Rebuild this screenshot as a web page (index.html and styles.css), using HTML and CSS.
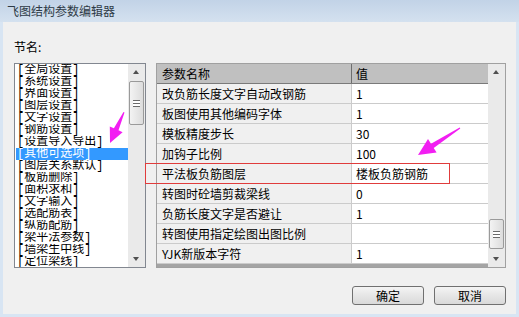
FILE: index.html
```html
<!DOCTYPE html>
<html lang="zh-CN">
<head>
    <meta charset="UTF-8">
    <title>飞图结构参数编辑器</title>
    <link rel="stylesheet" href="styles.css">
</head>
<body>
<div class="window">
    <div class="titlebar">飞图结构参数编辑器</div>

    <div class="client">
        <div class="label">节名:</div>

        <div class="main">
            <div class="listbox">
                <ul class="items">
                    <li>[全局设置]</li>
                    <li>[系统设置]</li>
                    <li>[界面设置]</li>
                    <li>[图层设置]</li>
                    <li>[文字设置]</li>
                    <li>[钢筋设置]</li>
                    <li>[设置导入导出]</li>
                    <li class="sel">[其他可选项]</li>
                    <li>[图层关系默认]</li>
                    <li>[板筋删除]</li>
                    <li>[面积求和]</li>
                    <li>[文字输入]</li>
                    <li>[选配筋表]</li>
                    <li>[纵筋配筋]</li>
                    <li>[梁平法参数]</li>
                    <li>[墙梁生中线]</li>
                    <li>[定位梁线]</li>
                </ul>
                <div class="vscroll">
                    <div class="sbtn up"></div>
                    <div class="track"><div class="thumb list-thumb"><i></i></div></div>
                    <div class="sbtn down"></div>
                </div>
            </div>

            <div class="grid">
                <div class="table">
                    <div class="row head">
                        <div class="name">参数名称</div>
                        <div class="val">值</div>
                    </div>
                    <div class="row"><div class="name">改负筋长度文字自动改钢筋</div><div class="val">1</div></div>
                    <div class="row"><div class="name">板图使用其他编码字体</div><div class="val">1</div></div>
                    <div class="row"><div class="name">模板精度步长</div><div class="val">30</div></div>
                    <div class="row"><div class="name">加钩子比例</div><div class="val">100</div></div>
                    <div class="row"><div class="name">平法板负筋图层</div><div class="val">楼板负筋钢筋</div></div>
                    <div class="row"><div class="name">转图时砼墙剪裁梁线</div><div class="val">0</div></div>
                    <div class="row"><div class="name">负筋长度文字是否避让</div><div class="val">1</div></div>
                    <div class="row"><div class="name">转图使用指定绘图出图比例</div><div class="val"></div></div>
                    <div class="row"><div class="name">YJK新版本字符</div><div class="val">1</div></div>
                    <div class="hbar"></div>
                </div>
                <div class="vscroll">
                    <div class="sbtn up"></div>
                    <div class="track"><div class="thumb grid-thumb"><i></i></div></div>
                    <div class="sbtn down"></div>
                </div>
            </div>
        </div>

        <div class="buttons">
            <button class="btn">确定</button>
            <button class="btn">取消</button>
        </div>
    </div>

    <!-- annotation marks drawn over the dialog -->
    <svg class="marks" width="519" height="317" viewBox="0 0 519 317">
        <rect x="145.5" y="163.5" width="304" height="20" fill="none" stroke="#e03c3c" stroke-width="1"/>
        <polygon fill="#f21ef2" points="123.5,112 124.5,112.5 118.5,130.3 122.6,132.2 110,143 109.8,126.4 113.9,128.3"/>
        <polygon fill="#f21ef2" points="460.3,128.4 459.7,127.6 431,143.7 428,139.1 418,155 436.6,152.5 433.7,147.9"/>
    </svg>
</div>
</body>
</html>
```

FILE: styles.css
```css
* {
    box-sizing: border-box;
}

body {
    margin: 0;
    font-family: "Noto Sans CJK SC", "Liberation Sans", sans-serif;
    font-size: 12px;
    color: #000;
    background: #fff;
}

.window {
    position: relative;
    width: 519px;
    height: 317px;
    background: #d8e5f3;
    display: flex;
    flex-direction: column;
}

.titlebar {
    height: 22px;
    padding: 3px 0 0 7px;
    line-height: 16px;
    font-size: 12px;
    color: #2e3a46;
    background: linear-gradient(#c2d3e7, #d4e1ef);
}

.client {
    flex: 1;
    margin: 0 3px 3px 3px;
    background: #f0f0f0;
    padding: 18px 10px 0 11px;
    display: flex;
    flex-direction: column;
}

.label {
    height: 14px;
    line-height: 14px;
    margin-bottom: 9px;
}

.main {
    display: flex;
    gap: 10px;
    height: 205px;
}

/* left list */
.listbox {
    width: 132px;
    height: 205px;
    border: 1px solid #828790;
    background: #fff;
    display: flex;
}

.items {
    list-style: none;
    margin: 0;
    padding: 0 0 0 1px;
    width: 113px;
    overflow: hidden;
}

.items li {
    height: 12px;
    line-height: 12px;
    overflow: hidden;
    font-family: "Liberation Mono", "Noto Sans CJK SC", monospace;
    font-size: 12px;
    padding-left: 1px;
    white-space: nowrap;
}

.items li.sel {
    background: #3399ff;
    color: #fff;
}

/* scrollbars */
.vscroll {
    width: 17px;
    display: flex;
    flex-direction: column;
    background: #eaeaea;
}

.sbtn {
    height: 17px;
    position: relative;
}

.sbtn::after {
    content: "";
    position: absolute;
    left: 5px;
    width: 0;
    height: 0;
    border-left: 3.5px solid transparent;
    border-right: 3.5px solid transparent;
}

.sbtn.up::after {
    top: 6px;
    border-bottom: 4px solid #505050;
}

.sbtn.down::after {
    top: 7px;
    border-top: 4px solid #505050;
}

.track {
    flex: 1;
    position: relative;
}

.thumb {
    margin: 0 1px;
    border: 1px solid #9a9a9a;
    border-radius: 2px;
    background: linear-gradient(90deg, #f3f3f3, #dcdcdc);
    display: flex;
    align-items: center;
    justify-content: center;
}

.thumb i {
    width: 7px;
    height: 7px;
    border-top: 1px solid #6a6a6a;
    border-bottom: 1px solid #6a6a6a;
    background: linear-gradient(#fff 0 2px, #6a6a6a 2px 3px, #fff 3px);
}

.list-thumb {
    height: 44px;
}

.grid-thumb {
    margin-top: 138px;
    height: 30px;
}

/* right grid */
.grid {
    width: 350px;
    height: 205px;
    border: 1px solid #a0a0a0;
    background: #f0f0f0;
    display: flex;
}

.table {
    width: 331px;
    display: flex;
    flex-direction: column;
}

.row {
    display: flex;
    height: 20px;
    line-height: 19px;
    border-bottom: 1px solid #cbcbcb;
}

.row .name {
    width: 195px;
    padding-left: 5px;
    background: #f0f0f0;
    border-right: 1px solid #cbcbcb;
    white-space: nowrap;
}

.row .val {
    flex: 1;
    padding-left: 4px;
    background: #fff;
    white-space: nowrap;
}

.row.head {
    border-bottom: 1px solid #7a7a7a;
}

.row.head .name,
.row.head .val {
    background: #c0c0c0;
}

.row.head .name {
    border-right: 1px solid #6e6e6e;
}

.hbar {
    flex: 1;
    background: #a4a4a4;
}

/* buttons */
.buttons {
    display: flex;
    justify-content: flex-end;
    gap: 10px;
    margin-top: 18px;
}

.btn {
    width: 72px;
    height: 19px;
    padding: 0;
    font-family: "Noto Sans CJK SC", sans-serif;
    font-size: 12px;
    line-height: 16px;
    color: #000;
    border: 1px solid #707070;
    border-radius: 3px;
    background: linear-gradient(#f4f4f4, #e6e6e6 50%, #d9d9d9);
}

.marks {
    position: absolute;
    left: 0;
    top: 0;
    pointer-events: none;
}
```
